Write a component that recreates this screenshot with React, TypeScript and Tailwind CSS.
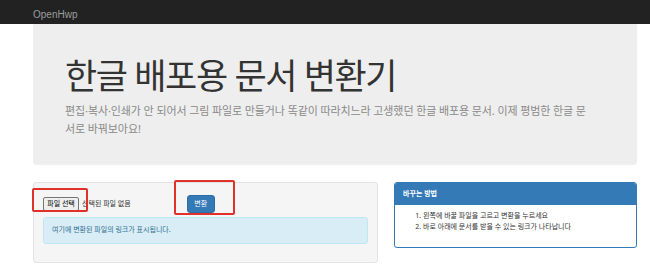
const KR = "font-['Noto_Sans','Noto_Sans_CJK_KR',sans-serif]";

function RedMark({ className }: { className: string }) {
  return <div className={`pointer-events-none absolute rounded-[2px] border-2 border-[#e0322d] ${className}`} />;
}

export default function App() {
  return (
    <div className={`relative min-h-screen bg-white text-[#333] ${KR}`}>
      <nav className="h-[24px] bg-[#222] pl-[33px]">
        <span className="font-['Liberation_Sans',Arial,sans-serif] text-[10px] leading-[23px] text-[#9d9d9d]">OpenHwp</span>
      </nav>

      <main className="ml-[33px] w-[604px]">
        <section className="h-[141px] rounded-b-[4px] bg-[#eee] px-[32px] pt-[32px]">
          <h1 className="text-[35px] leading-[40px] tracking-[-1.4px] text-[#333]">한글 배포용 문서 변환기</h1>
          <p className="mt-[6px] whitespace-nowrap text-[11px] leading-[17.5px] tracking-[-0.1px] text-[#8a8a8a]">
            편집·복사·인쇄가 안 되어서 그림 파일로 만들거나 똑같이 따라치느라 고생했던 한글 배포용 문서. 이제 평범한 한글 문
            <br />
            서로 바꿔보아요!
          </p>
        </section>

        <div className="mt-[17px] flex gap-[16px]">
          <div className="h-[81px] w-[345px] rounded-[3px] border border-[#e3e3e3] bg-[#f5f5f5] px-[9px] pt-[9px]">
            <div className="flex h-[24px] items-center">
              <span className="flex h-[14px] w-[36px] items-center justify-center rounded-[2px] border border-[#767676] bg-[#efefef] text-[7px] text-black">
                파일 선택
              </span>
              <span className="ml-[3px] text-[7px] text-[#333]">선택된 파일 없음</span>
              <span className="ml-[56px] flex h-[18px] w-[28px] items-center justify-center rounded-[3px] border border-[#2e6da4] bg-[#337ab7] text-[7px] text-white">
                변환
              </span>
            </div>
            <div className="mt-[1px] flex h-[27px] items-center rounded-[3px] border border-[#bce8f1] bg-[#d9edf7] pl-[8px] text-[7px] text-[#31708f]">
              여기에 변환된 파일의 링크가 표시됩니다.
            </div>
          </div>

          <div className="h-[66px] w-[243px] overflow-hidden rounded-[3px] border border-[#337ab7] bg-white">
            <div className="flex h-[22px] items-center bg-[#337ab7] pl-[8px] text-[7px] font-bold text-white">바꾸는 방법</div>
            <ol className="list-decimal pl-[28px] pt-[6px] text-[7px] leading-[10.7px] text-[#333]">
              <li>왼쪽에 바꿀 파일을 고르고 변환을 누르세요</li>
              <li>바로 아래에 문서를 받을 수 있는 링크가 나타납니다</li>
            </ol>
          </div>
        </div>
      </main>

      <RedMark className="left-[32px] top-[188px] h-[24px] w-[56px]" />
      <RedMark className="left-[174px] top-[180px] h-[35px] w-[61px]" />
    </div>
  );
}
